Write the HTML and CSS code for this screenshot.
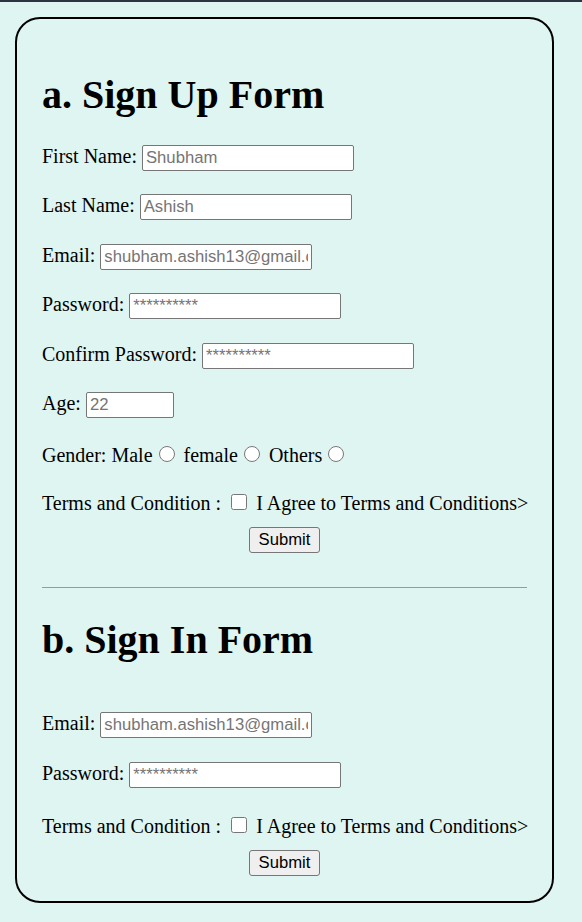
FILE: index.html
```html
<!DOCTYPE html>
<html lang="en">
<head>
<meta charset="utf-8">
<title>Forms</title>
<link rel="stylesheet" href="styles.css">
</head>
<body>
<div class="card">
  <h1 class="title">a. Sign Up Form</h1>
  <form class="form">
    <div class="row">First Name: <input class="field" type="text" placeholder="Shubham"></div>
    <div class="row">Last Name: <input class="field" type="text" placeholder="Ashish"></div>
    <div class="row">Email: <input class="field" type="email" placeholder="shubham.ashish13@gmail.com"></div>
    <div class="row">Password: <input class="field" type="password" placeholder="**********"></div>
    <div class="row">Confirm Password: <input class="field" type="password" placeholder="**********"></div>
    <div class="row">Age: <input class="field field-short" type="text" placeholder="22"></div>
    <div class="row">Gender: Male<input class="radio" type="radio" name="g"> female<input class="radio" type="radio" name="g"> Others<input class="radio" type="radio" name="g"></div>
    <div class="row row-terms">Terms and Condition : <input class="check" type="checkbox"> I Agree to Terms and Conditions&gt;</div>
    <div class="actions"><button class="btn" type="button">Submit</button></div>
  </form>
  <hr class="rule">
  <h1 class="title title-second">b. Sign In Form</h1>
  <form class="form form-second">
    <div class="row">Email: <input class="field" type="email" placeholder="shubham.ashish13@gmail.com"></div>
    <div class="row">Password: <input class="field" type="password" placeholder="**********"></div>
    <div class="row row-terms row-terms-second">Terms and Condition : <input class="check" type="checkbox"> I Agree to Terms and Conditions&gt;</div>
    <div class="actions"><button class="btn" type="button">Submit</button></div>
  </form>
</div>
</body>
</html>
```
FILE: styles.css
```css
html {
  background: #dff5f1;
  border-top: 2px solid #2d3540;
}
body {
  margin: 0;
  padding: 15px 0 20px 15px;
  font-family: "Liberation Serif", "Times New Roman", serif;
  font-size: 20px;
  color: #000;
}
.card {
  box-sizing: border-box;
  width: 539px;
  border: 2px solid #000;
  border-radius: 25px;
  padding: 25px;
}
.title {
  font-size: 40px;
  font-weight: bold;
  margin: 26.8px 0;
  line-height: normal;
}
.title-second {
  margin-top: 28px;
  margin-bottom: 49px;
}
.form {
  margin: 0;
}
.row {
  margin: 23.5px 0;
  white-space: nowrap;
}
.row-terms {
  margin-bottom: 0;
}
.row-terms-second {
  margin-top: 25px;
}
.field {
  box-sizing: border-box;
  width: 212px;
  height: 26px;
  border: 1px solid #767676;
  border-radius: 2px;
  padding: 1px 3px;
  font-family: "Liberation Sans", Arial, sans-serif;
  font-size: 16.67px;
  background: #fff;
  color: #000;
}
.field::placeholder {
  color: #757575;
}
.field-short {
  width: 88px;
}
.radio {
  width: 16px;
  height: 16px;
  margin: 4px 4px 0 6px;
}
.check {
  width: 16px;
  height: 16px;
  margin: 4px 4px 4px 5px;
}
.actions {
  text-align: center;
  margin-top: 12px;
}
.btn {
  box-sizing: border-box;
  width: 71px;
  height: 26px;
  padding: 1px 8px;
  font-family: "Liberation Sans", Arial, sans-serif;
  font-size: 16.67px;
  color: #000;
  background: #efefef;
  border: 1px solid #767676;
  border-radius: 3px;
}
.rule {
  margin: 34px 0 0;
  border: 0;
  border-top: 1px solid #9a9a9a;
  height: 0;
}
```
